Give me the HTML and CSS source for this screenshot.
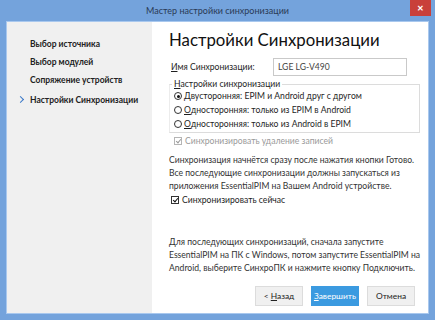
FILE: index.html
```html
<!DOCTYPE html>
<html lang="ru">
  <head>
    <meta charset="UTF-8" />
    <title>Мастер настройки синхронизации</title>
    <link rel="stylesheet" href="styles.css">
  </head>
  <body>
    <div class="window">
      <div class="titlebar">
        <span class="title">Мастер настройки синхронизации</span>
        <span class="close">&#x2715;</span>
      </div>

      <div class="client">
        <div class="sidebar">
          <div class="step">Выбор источника</div>
          <div class="step">Выбор модулей</div>
          <div class="step">Сопряжение устройств</div>
          <div class="step current">Настройки Синхронизации</div>
        </div>

        <div class="main">
          <h1>Настройки Синхронизации</h1>

          <div class="name-row">
            <label><u>И</u>мя Синхронизации:</label>
            <div class="textbox">LGE LG-V490</div>
          </div>

          <fieldset class="group">
            <legend><u>Н</u>астройки синхронизации</legend>
            <div class="option"><span class="radio checked"></span>Двусторонняя: EPIM и Android друг с другом</div>
            <div class="option"><span class="radio"></span><u>О</u>дносторонняя: только из EPIM в Android</div>
            <div class="option"><span class="radio"></span><u>О</u>дносторонняя: только из Android в EPIM</div>
          </fieldset>

          <div class="check disabled"><span class="box checked"></span>Синхронизировать удаление записей</div>

          <p class="note">Синхронизация начнётся сразу после нажатия кнопки Готово.<br>Все последующие синхронизации должны запускаться из<br>приложения EssentialPIM на Вашем Android устройстве.</p>

          <div class="check"><span class="box checked"></span>Синхронизировать сейчас</div>

          <p class="note later">Для последующих синхронизаций, сначала запустите<br>EssentialPIM на ПК с Windows, потом запустите EssentialPIM на<br>Android, выберите СинхроПК и нажмите кнопку Подключить.</p>

          <div class="buttons">
            <button>&lt; <u>Н</u>азад</button>
            <button class="primary"><u>З</u>авершить</button>
            <button>Отмена</button>
          </div>
        </div>
      </div>
    </div>
  </body>
</html>
```

FILE: styles.css
```css
html, body {
  margin: 0;
  padding: 0;
}
body {
  font-family: Lato, "Noto Sans", sans-serif;
  font-size: 8.6px;
  color: #1e1e1e;
}
.window {
  width: 435px;
  height: 320px;
  box-sizing: border-box;
  background-color: #74a3dc;
  padding: 0 6px 6px 6px;
  display: flex;
  flex-direction: column;
  overflow: hidden;
}
.titlebar {
  height: 21px;
  flex: none;
  display: flex;
  align-items: center;
  justify-content: center;
  position: relative;
}
.title {
  font-size: 9px;
  color: #2a3a55;
  margin-top: -1px;
}
.close {
  position: absolute;
  right: -2px;
  top: 0;
  width: 21px;
  height: 16px;
  background-color: #c9403a;
  color: #ffffff;
  font-size: 8px;
  font-weight: bold;
  display: flex;
  align-items: center;
  justify-content: center;
}
.client {
  flex: 1;
  min-height: 0;
  display: flex;
  background-color: #ffffff;
  border: 1px solid #a9c8ee;
}
.sidebar {
  width: 145px;
  flex: none;
  background-color: #f0f0f0;
  padding-top: 13px;
  box-sizing: border-box;
}
.step {
  padding-left: 23px;
  height: 18px;
  line-height: 18px;
  font-size: 8.5px;
  font-weight: bold;
  color: #222222;
  position: relative;
  white-space: nowrap;
}
.step.current {
  margin-top: 2px;
}
.step.current::before {
  content: "";
  position: absolute;
  left: 11px;
  top: 6px;
  width: 4px;
  height: 4px;
  border-top: 1.2px solid #3a78c8;
  border-right: 1.2px solid #3a78c8;
  transform: rotate(45deg);
}
.main {
  flex: 1;
  min-width: 0;
  padding: 6px 10px 0 17px;
  display: flex;
  flex-direction: column;
}
h1 {
  font-size: 16.8px;
  font-weight: normal;
  margin: 0 0 6px 0;
  color: #111111;
  line-height: 24px;
  white-space: nowrap;
}
.name-row {
  display: flex;
  align-items: center;
  margin-left: 2px;
}
.name-row label {
  width: 102px;
}
.textbox {
  width: 128px;
  height: 16px;
  line-height: 16px;
  border: 1px solid #c9c9c9;
  padding-left: 4px;
  color: #444444;
}
.group {
  margin: 3px 0 0 0;
  padding: 0 0 1px 4px;
  border: 1px solid #dcdcdc;
  border-left-color: #ececec;
  width: 251px;
  box-sizing: border-box;
}
.group legend {
  padding: 0 2px;
  margin-left: -2px;
  line-height: 10px;
}
.option {
  display: flex;
  align-items: center;
  height: 14px;
  white-space: nowrap;
}
.radio {
  width: 8px;
  height: 8px;
  border: 1px solid #333333;
  border-radius: 50%;
  margin-right: 2px;
  box-sizing: border-box;
  position: relative;
}
.radio.checked::after {
  content: "";
  position: absolute;
  left: 1.5px;
  top: 1.5px;
  width: 3px;
  height: 3px;
  border-radius: 50%;
  background-color: #111111;
}
.check {
  display: flex;
  align-items: center;
  height: 14px;
  margin-left: 2px;
  white-space: nowrap;
}
.check.disabled {
  color: #9a9a9a;
  margin: 1px 0 0 5px;
}
.box {
  width: 8px;
  height: 8px;
  border: 1px solid #333333;
  margin-right: 3px;
  box-sizing: border-box;
  position: relative;
  background-color: #ffffff;
}
.check.disabled .box {
  border-color: #b5b5b5;
}
.box.checked::after {
  content: "";
  position: absolute;
  left: 1.5px;
  top: 0;
  width: 2px;
  height: 4px;
  border-right: 1.3px solid #111111;
  border-bottom: 1.3px solid #111111;
  transform: rotate(40deg);
}
.check.disabled .box.checked::after {
  border-color: #9a9a9a;
}
.note {
  margin: 6px 0 0 0;
  line-height: 13px;
  color: #333333;
  white-space: nowrap;
}
.note.later {
  margin-top: 29px;
}
.buttons {
  display: flex;
  justify-content: flex-end;
  gap: 8px;
  margin-top: auto;
  padding: 0 3px 7px 0;
}
button {
  width: 48px;
  height: 20px;
  font-family: inherit;
  font-size: 8.4px;
  border: 1px solid #dcdcdc;
  background-color: #f0f0f0;
  color: #222222;
  padding: 0;
}
button.primary {
  background-color: #3b9ae0;
  border-color: #3b9ae0;
  color: #ffffff;
}
```
